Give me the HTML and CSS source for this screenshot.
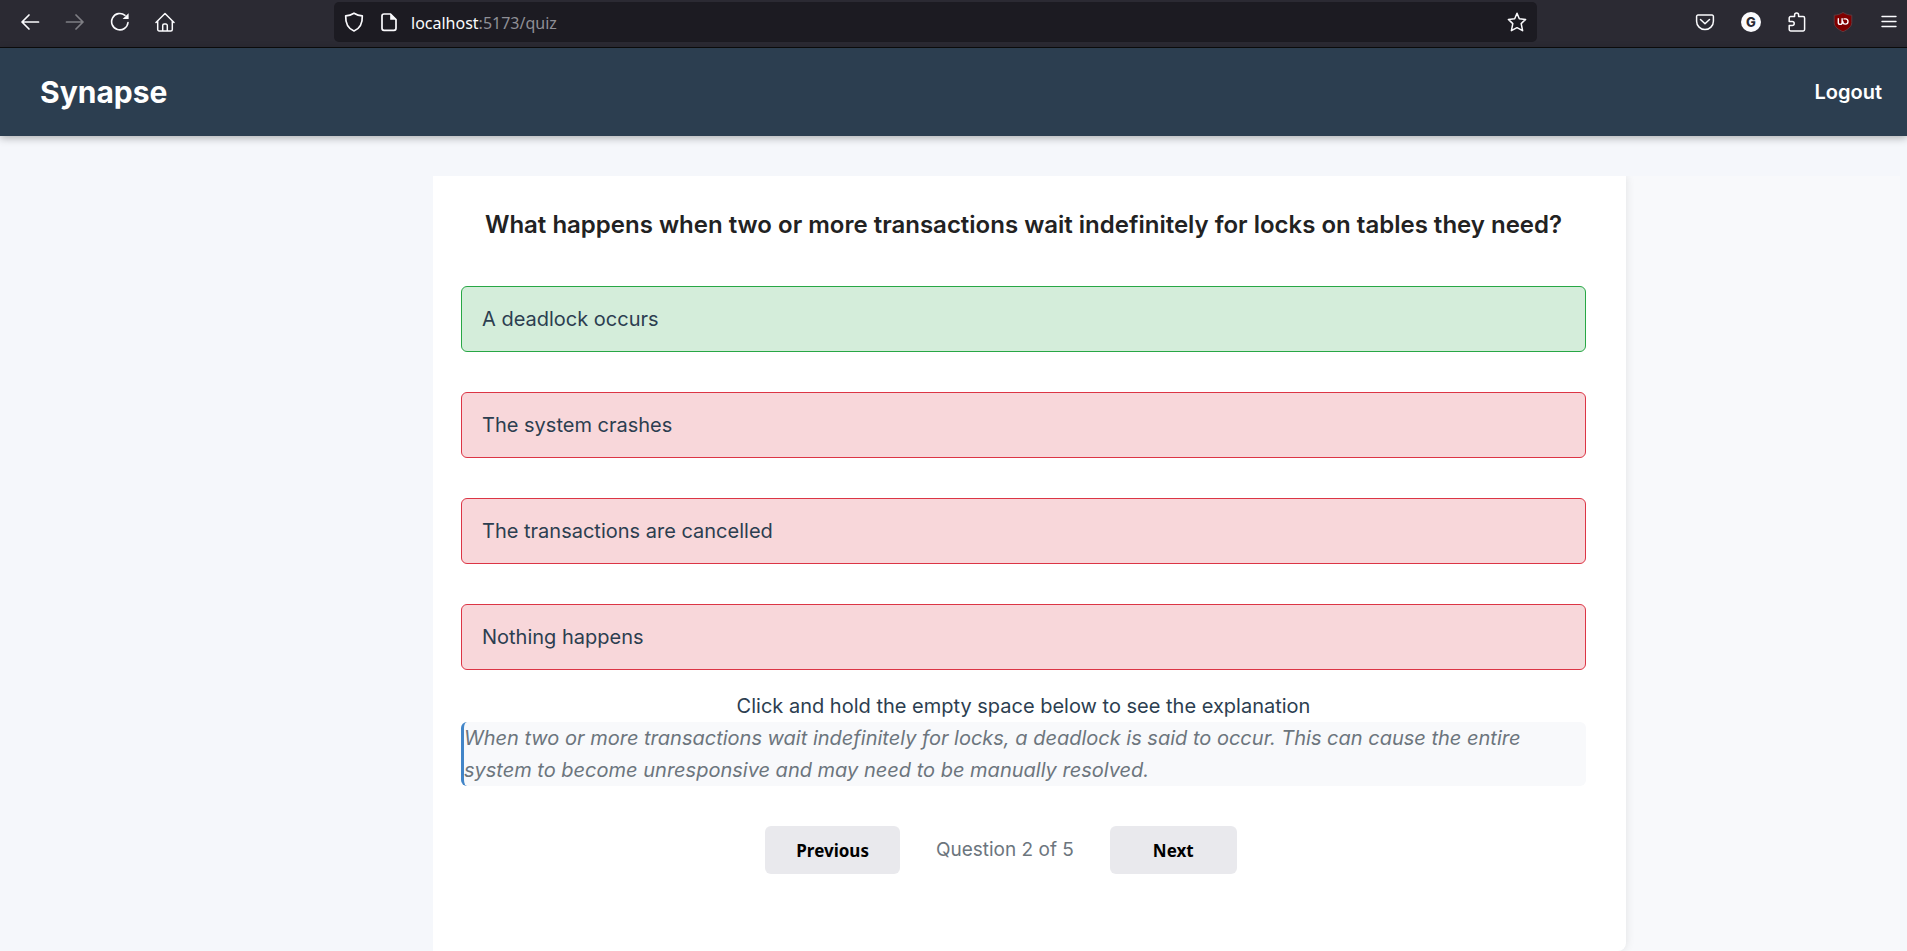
FILE: index.html
```html
<!DOCTYPE html>
<html lang="en">
<head>
<meta charset="utf-8">
<meta name="viewport" content="width=device-width, initial-scale=1">
<title>Synapse</title>
<link rel="stylesheet" href="styles.css">
</head>
<body>
<div class="toolbar">
  <div class="nav-buttons">
    <button class="icon-button" aria-label="Back"><svg viewBox="0 0 20 20"><path d="M18.500 10H2.500M9 3L2 10l7 7" stroke-width="1.700"/></svg></button>
    <button class="icon-button faded" aria-label="Forward" disabled><svg viewBox="0 0 20 20"><path d="M1.500 10h16M11 3l7 7-7 7" stroke-width="1.700"/></svg></button>
    <button class="icon-button" aria-label="Reload"><svg viewBox="0 0 20 20"><path d="M18 10.500a8.200 8.200 0 1 1-3-7.200" stroke-width="1.600"/><path class="solid" d="M18.600 1.200v5.900h-6z"/></svg></button>
    <button class="icon-button" aria-label="Home"><svg viewBox="0 0 20 20"><path d="M1 10.500L10 1.500l9 9M2.700 9.200v8.300a1.500 1.500 0 0 0 1.500 1.500h11.600a1.500 1.500 0 0 0 1.500-1.500V9.200M7.700 19v-5.500a1.500 1.500 0 0 1 1.500-1.500h1.600a1.500 1.500 0 0 1 1.500 1.500V19"/></svg></button>
  </div>
  <div class="address-bar">
    <svg class="icon" viewBox="0 0 20 20"><path d="M10 1.200c2.500 1.500 5.200 2.400 8.300 2.700C18.600 11.500 15.800 16.700 10 19 4.200 16.700 1.400 11.500 1.700 3.900 4.800 3.600 7.500 2.700 10 1.200z" stroke-width="1.700"/></svg>
    <svg class="icon" viewBox="0 0 20 20"><path d="M11.500 2H5a2 2 0 0 0-2 2v12.300a2 2 0 0 0 2 2h10a2 2 0 0 0 2-2V7.500z" stroke-width="1.700"/><path class="solid" d="M11.200 1.500v6.300h6.300z"/></svg>
    <span class="url"><span class="host">localhost</span>:5173/quiz</span>
    <button class="icon-button" aria-label="Bookmark"><svg viewBox="0 0 20 20"><path d="M10 1.300l2.300 5.400 6.300.7-4.400 4.200 1.400 7.100L10 15.700l-5.600 3 1.400-7.100L1.400 7.400l6.300-.7z"/></svg></button>
  </div>
  <div class="extensions">
    <button class="icon-button" aria-label="Pocket"><svg viewBox="0 0 20 20"><path d="M3 3h14a1.400 1.400 0 0 1 1.400 1.400v4.800a8.400 8.400 0 0 1-16.800 0V4.400A1.400 1.400 0 0 1 3 3zM5.500 7.500L10 11.800l4.500-4.300"/></svg></button>
    <button class="icon-button" aria-label="Grammar checker"><span class="badge">G</span></button>
    <button class="icon-button" aria-label="Extensions"><svg viewBox="0 0 20 20"><path d="M2.200 7.600V5.900A1.400 1.400 0 0 1 3.600 4.500h4V3a2 2 0 0 1 4 0v1.500h4.600a1.400 1.400 0 0 1 1.400 1.400V17.500a1.400 1.400 0 0 1-1.400 1.400H3.600a1.400 1.400 0 0 1-1.400-1.400v-4h3a2 2 0 0 0 0-4H2.200z"/></svg></button>
    <button class="icon-button" aria-label="Ad blocker"><svg viewBox="0 0 20 20"><path class="shield" d="M10 .5c2.700 1.700 5.500 2.500 8.800 2.700v7.300c0 4.300-4.300 7.200-8.800 9.200-4.500-2-8.800-4.900-8.800-9.200V3.200C4.500 3 7.300 2.200 10 .500z"/><path d="M5.300 6.800v3.700a1.900 1.900 0 0 0 3.800 0V6.800M11 6.900h1.500a2.600 2.600 0 1 1-2.700 2.600" stroke-width="1.400"/></svg></button>
    <button class="icon-button" aria-label="Menu"><svg viewBox="0 0 20 20"><path d="M3 4.500h14M3 9.500h14M3 14.500h14" stroke-width="1.400"/></svg></button>
  </div>
</div>
<header class="header">
  <h1 class="brand">Synapse</h1>
  <a class="logout" href="#">Logout</a>
</header>
<main class="page">
  <div class="quiz-area">
    <section class="card">
      <h2 class="question">What happens when two or more transactions wait indefinitely for locks on tables they need?</h2>
      <div class="options">
        <button class="option correct">A deadlock occurs</button>
        <button class="option wrong">The system crashes</button>
        <button class="option wrong">The transactions are cancelled</button>
        <button class="option wrong">Nothing happens</button>
      </div>
      <p class="hint">Click and hold the empty space below to see the explanation</p>
      <p class="explanation">When two or more transactions wait indefinitely for locks, a deadlock is said to occur. This can cause the entire system to become unresponsive and may need to be manually resolved.</p>
      <nav class="pager">
        <button class="page-button">Previous</button>
        <span class="progress">Question 2 of 5</span>
        <button class="page-button">Next</button>
      </nav>
    </section>
  </div>
</main>
</body>
</html>
```

FILE: styles.css
```css
* { box-sizing: border-box; }

body {
  margin: 0;
  min-height: 100vh;
  display: flex;
  flex-direction: column;
  font-family: Inter, "Liberation Sans", sans-serif;
  font-size: 20px;
  line-height: 32px;
  color: #2c3e50;
  background: #f5f7fb;
}

button { font: inherit; color: inherit; border: 0; cursor: pointer; }

.toolbar {
  display: flex;
  align-items: center;
  height: 48px;
  padding: 0 8px 4px 20px;
  background: #2b2a33;
  border-bottom: 1px solid #0c0c0d;
  color: #fbfbfe;
}

.nav-buttons { display: flex; gap: 25px; }
.extensions { display: flex; gap: 26px; margin-left: auto; }

.icon-button {
  display: block;
  width: 20px;
  height: 20px;
  padding: 0;
  background: none;
}

.faded { opacity: 0.4; }

.toolbar svg {
  display: block;
  flex: none;
  width: 20px;
  height: 20px;
  fill: none;
  stroke: currentColor;
  stroke-width: 1.5;
  stroke-linecap: round;
  stroke-linejoin: round;
}

.toolbar .solid { fill: currentColor; stroke: none; }
.toolbar .shield { fill: #800000; stroke: #5c3a40; stroke-width: 1; }

.address-bar {
  display: flex;
  align-items: center;
  gap: 15px;
  flex: 0 1 1203px;
  height: 40px;
  margin-left: 159px;
  padding: 0 10px;
  border-radius: 5px;
  background: #1c1b22;
}

.url {
  flex: 1;
  margin-left: -3px;
  padding-top: 2px;
  font-family: "Noto Sans", sans-serif;
  font-size: 16px;
  line-height: 24px;
  color: #8f8f96;
}

.host { color: #fbfbfe; }

.badge {
  display: block;
  height: 20px;
  border-radius: 50%;
  background: #fbfbfe;
  color: #2b2a33;
  font-size: 13px;
  font-weight: 800;
  line-height: 20px;
  text-align: center;
}

.header {
  position: relative;
  display: flex;
  align-items: center;
  justify-content: space-between;
  height: 88px;
  padding: 0 25px 0 40px;
  background: #2c3e50;
  color: #fff;
  box-shadow: 0 2px 8px rgba(0, 0, 0, 0.3);
}

.brand { margin: 0; font-size: 30px; font-weight: 700; line-height: 40px; }
.logout { color: inherit; font-weight: 600; text-decoration: none; }

.page { flex: 1; display: flex; padding: 40px 7px 0 0; }

.quiz-area {
  flex: 1;
  display: flex;
  margin-left: 433px;
  background: #f8f9fb;
}

.card {
  flex: 0 1 1193px;
  padding: 33px 40px 32px 28px;
  background: #fff;
  border-radius: 0 0 8px 0;
  box-shadow: 0 0 10px rgba(0, 0, 0, 0.1);
  clip-path: inset(0 -16px 0 0);
}

.question {
  margin: 0 0 45px;
  font-size: 24px;
  font-weight: 600;
  line-height: 32px;
  text-align: center;
  color: #222;
}

.options { display: flex; flex-direction: column; gap: 40px; }

.option {
  padding: 16px 20px;
  border: 1px solid;
  border-radius: 6px;
  text-align: left;
}

.correct { background: #d4edda; border-color: #28a745; }
.wrong { background: #f8d7da; border-color: #dc3545; }

.hint { margin: 20px 0 0; text-align: center; }

.explanation {
  margin: 0 0 40px;
  border-left: 3px solid #4285c8;
  border-radius: 6px;
  background: #f8f9fb;
  color: #6c757d;
  font-style: italic;
}

.pager { display: flex; justify-content: center; gap: 36px; align-items: center; margin-right: 45px; }

.page-button {
  padding: 13px 31px 11px;
  border-radius: 6px;
  background: #e9e9ed;
  color: #000;
  font-family: "Noto Sans", sans-serif;
  font-size: 17px;
  font-weight: 700;
  line-height: 24px;
}

.page-button:last-child { padding: 13px 43px 11px; }
.progress { font-size: 19px; color: #6c757d; }
```
